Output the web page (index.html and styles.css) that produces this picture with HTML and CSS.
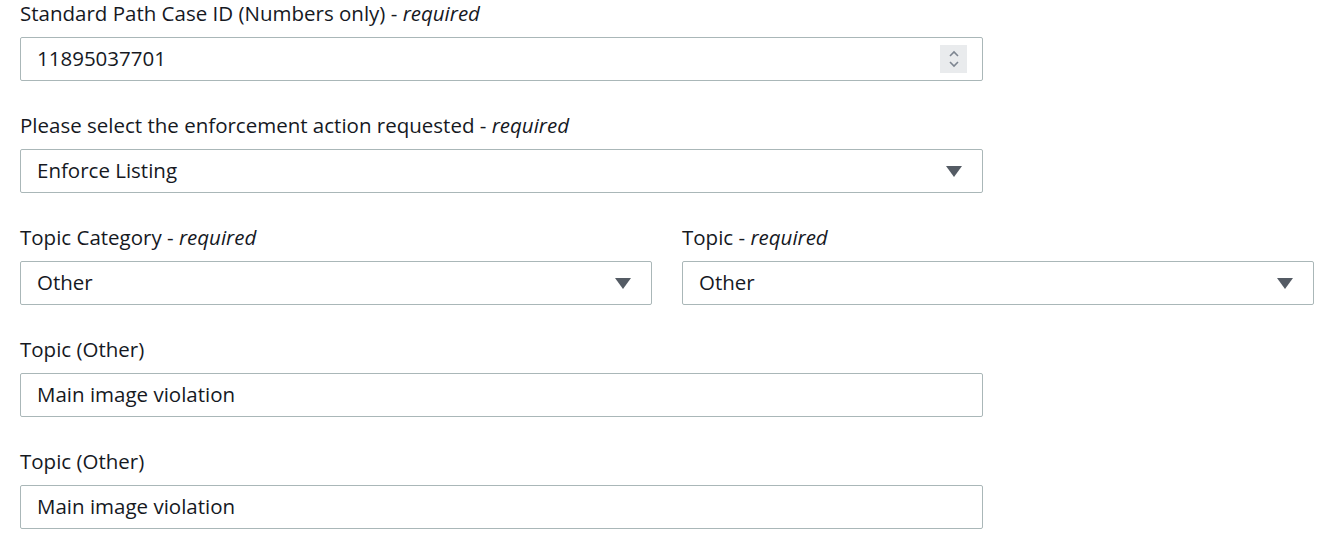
FILE: index.html
```html
<!DOCTYPE html>
<html lang="en">
<head>
    <meta charset="UTF-8">
    <meta name="viewport" content="width=device-width, initial-scale=1.0">
    <title>Enforcement Request</title>
    <link rel="stylesheet" href="styles.css">
</head>
<body>
    <form class="form-grid">
        <div class="field span-9">
            <label class="field-label">Standard Path Case ID (Numbers only) <span class="req">- <em>required</em></span></label>
            <div class="control">
                <input class="control-input" type="text" value="11895037701">
                <span class="spinner">
                    <svg width="12" height="20" viewBox="0 0 12 20">
                        <path d="M2 7 L6 3 L10 7" fill="none" stroke="#7d8590" stroke-width="1.6"/>
                        <path d="M2 13 L6 17 L10 13" fill="none" stroke="#7d8590" stroke-width="1.6"/>
                    </svg>
                </span>
            </div>
        </div>
        <div class="field span-9">
            <label class="field-label">Please select the enforcement action requested <span class="req">- <em>required</em></span></label>
            <div class="control select">
                <span class="control-value">Enforce Listing</span>
                <svg class="caret" width="16" height="11" viewBox="0 0 16 11"><path d="M0 0 H16 L8 11 Z" fill="#545b64"/></svg>
            </div>
        </div>
        <div class="field span-6">
            <label class="field-label">Topic Category <span class="req">- <em>required</em></span></label>
            <div class="control select">
                <span class="control-value">Other</span>
                <svg class="caret" width="16" height="11" viewBox="0 0 16 11"><path d="M0 0 H16 L8 11 Z" fill="#545b64"/></svg>
            </div>
        </div>
        <div class="field span-6">
            <label class="field-label">Topic <span class="req">- <em>required</em></span></label>
            <div class="control select">
                <span class="control-value">Other</span>
                <svg class="caret" width="16" height="11" viewBox="0 0 16 11"><path d="M0 0 H16 L8 11 Z" fill="#545b64"/></svg>
            </div>
        </div>
        <div class="field span-9">
            <label class="field-label">Topic (Other)</label>
            <div class="control">
                <input class="control-input" type="text" value="Main image violation">
            </div>
        </div>
        <div class="field span-9">
            <label class="field-label">Topic (Other)</label>
            <div class="control">
                <input class="control-input" type="text" value="Main image violation">
            </div>
        </div>
    </form>
</body>
</html>
```

FILE: styles.css
```css
body {
    margin: 0;
    padding: 0 10px 0 20px;
    background: #ffffff;
    font-family: "Open Sans", Arial, sans-serif;
    color: #16191f;
}
.form-grid {
    display: grid;
    grid-template-columns: repeat(12, 1fr);
    column-gap: 30px;
    row-gap: 31px;
}
.field {
    display: flex;
    flex-direction: column;
}
/* 9-column fields always start a new row */
.span-9 {
    grid-column: 1 / span 9;
}
.span-6 {
    grid-column: span 6;
}
.field-label {
    font-size: 20.5px;
    line-height: 27px;
    margin-bottom: 10px;
}
.req em {
    font-style: italic;
}
.control {
    display: flex;
    align-items: center;
    height: 44px;
    box-sizing: border-box;
    border: 1px solid #aab7b8;
    border-radius: 2px;
    padding: 0 15px 0 16px;
    background: #ffffff;
}
.control-input {
    flex: 1;
    border: none;
    outline: none;
    padding: 0 0 2px;
    font-family: inherit;
    font-size: 20.5px;
    color: #16191f;
    background: transparent;
}
.control-value {
    flex: 1;
    font-size: 20.5px;
    padding-bottom: 2px;
}
.spinner {
    display: flex;
    align-items: center;
    justify-content: center;
    width: 27px;
    height: 28px;
    background: #e9ebed;
}
.select {
    padding-right: 20px;
}
.caret {
    display: block;
}
```
